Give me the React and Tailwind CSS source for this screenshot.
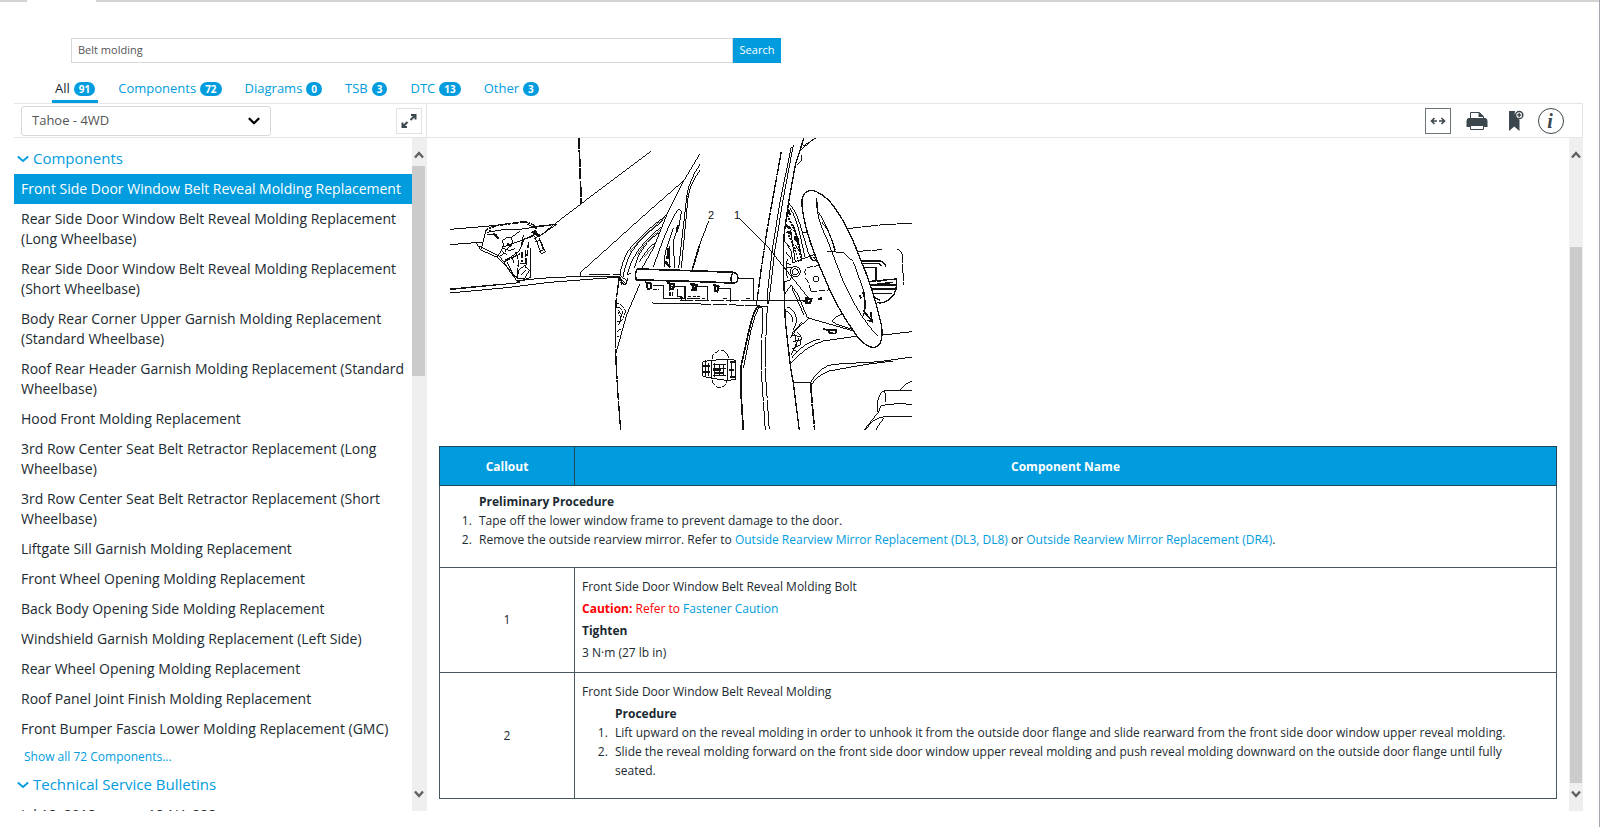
import React, { useState } from "react";
import { ChevronDown } from "lucide-react";

const tabs = [
  { name: "All", count: 91 },
  { name: "Components", count: 72 },
  { name: "Diagrams", count: 0 },
  { name: "TSB", count: 3 },
  { name: "DTC", count: 13 },
  { name: "Other", count: 3 },
];

const components = [
  "Front Side Door Window Belt Reveal Molding Replacement",
  "Rear Side Door Window Belt Reveal Molding Replacement (Long Wheelbase)",
  "Rear Side Door Window Belt Reveal Molding Replacement (Short Wheelbase)",
  "Body Rear Corner Upper Garnish Molding Replacement (Standard Wheelbase)",
  "Roof Rear Header Garnish Molding Replacement (Standard Wheelbase)",
  "Hood Front Molding Replacement",
  "3rd Row Center Seat Belt Retractor Replacement (Long Wheelbase)",
  "3rd Row Center Seat Belt Retractor Replacement (Short Wheelbase)",
  "Liftgate Sill Garnish Molding Replacement",
  "Front Wheel Opening Molding Replacement",
  "Back Body Opening Side Molding Replacement",
  "Windshield Garnish Molding Replacement (Left Side)",
  "Rear Wheel Opening Molding Replacement",
  "Roof Panel Joint Finish Molding Replacement",
  "Front Bumper Fascia Lower Molding Replacement (GMC)",
];

const Link = ({ children }) => (
  <a href="#" className="text-[#009cde]">
    {children}
  </a>
);

const SectionTitle = ({ children }) => (
  <h2>
    <button type="button" className="flex items-center gap-1 pl-[3px] text-[15px] leading-[29px] text-[#009cde]">
      <svg viewBox="0 0 12 8" className="h-2 w-3" fill="none" stroke="currentColor" strokeWidth="1.8">
        <path d="M.8 1.500 6 6 11.200 1.500" />
      </svg>
      {children}
    </button>
  </h2>
);

// up / down arrows at the ends of the scroll rails
const Arrow = ({ down }) => (
  <svg viewBox="0 0 10 8" className="h-2 w-[10px] shrink-0" fill="none" stroke="#606060" strokeWidth="2.4">
    <path d={down ? "M1 1.5 5 6 9 1.5" : "M1 6.5 5 2 9 6.5"} />
  </svg>
);

// --- Door drawing ---
const DoorDrawing = () => (
  <svg
    viewBox="449 138 464 294"
    className="block h-[294px] w-[464px]"
    fill="none"
    stroke="#111"
    strokeWidth="3"
    role="img"
    aria-label="Front side door window belt reveal molding"
  >
    {/* hood, pillar and mirror side */}
    <g transform="translate(440 135) scale(.3333)" shapeRendering="crispEdges">
      <path d="M416 8 419 70 421 130 424 206" strokeWidth="5" strokeDasharray="34 4 50 3" />
      <path d="M634 48 424 206 340 270 300 303M732 136 600 252 480 360 422 412 422 424" />
      <path d="M30 283 140 274 210 266M30 329 108 323M30 464 150 452 240 443M30 474 200 458 330 442 540 426M30 462 180 448" />
      <path d="M230 438 300 430 420 424 540 424" />
      <path d="M446 419H510M518 420H540" />
      <path d="M136 290Q142 278 180 270L250 261Q275 262 286 276" strokeWidth="5" strokeDasharray="12 3 7 2" />
      <path d="M136 292 128 325 122 345 108 323 126 322M140 292Q180 282 230 284L350 268 298 304 286 290M140 300 170 300 176 310M280 275 345 268M290 296 240 318 190 336" />
      <path d="M122 345 170 366 200 396 232 440 246 436 272 428 272 340M180 366 208 404 234 432M118 334 176 362" />
      <path d="M170 366Q196 340 188 316 196 306 214 308L218 320Q190 360 176 366M214 308 240 288M206 370 236 350 254 312 278 304" />
      <path d="M192 380 240 356M228 352 236 376 230 430M246 350V380M256 346V384M266 320 256 400" strokeWidth="4" strokeDasharray="20 4" />
      <path d="M236 404 254 392 268 406 254 430 232 432ZM242 420 258 406M284 304 304 356 316 350 298 310M282 312 300 300M286 320 300 316 310 346 298 350" />
      <path d="M160 296 176 312M276 290 292 300M284 286 296 306M202 326 214 334M196 376 208 370M280 296 300 300" strokeWidth="6" />
      <path d="M190 340Q210 352 226 340M186 350 204 362M250 300 244 330M200 380 226 430M216 366 222 384M240 384 262 388M262 268 290 282M146 284 160 292" />
      {/* a-pillar glass channels */}
      <path d="M780 56 732 136 680 240 640 340 606 400" />
      <path d="M780 88Q745 140 740 186L716 400M780 106Q748 150 744 190L724 400M740 186H748" />
      <path d="M680 240Q600 300 566 346 544 380 540 424 540 444 558 450M670 256Q600 310 574 352 556 384 548 430M664 276Q610 318 586 360 570 384 562 416M656 294Q620 318 596 362L582 400M650 320Q620 340 598 382" />
      <path d="M674 248Q606 304 570 350M660 286Q616 318 592 360M640 334 612 366" strokeWidth="2" />
      <path d="M640 396 668 318Q700 240 716 222L724 230 716 280M700 280 676 350 672 396M690 334 688 398M716 270 700 320 704 400M780 330 758 404" />
      <path d="M714 270 710 292M686 340 682 372M676 380 690 396" strokeWidth="7" />
      {/* door front edge */}
      <path d="M538 426 528 500 526 600 528 680 534 780 542 886" strokeWidth="4" strokeDasharray="60 3 90 2" />
      <path d="M600 446 560 540 528 654" />
      <path
        d="M530 506Q552 508 556 530L548 556M532 516Q546 518 548 536M530 560 546 556M530 590 542 582M530 606 536 604M534 530 542 546 536 570M536 526 544 540 540 566"
        strokeDasharray="8 2"
      />
      <path d="M540 430 558 448 564 430M540 440 552 450M562 420 572 414M542 424 560 436M546 434V450" />
      {/* reveal molding */}
      <path d="M780 408 592 402Q582 418 590 436L640 436 780 440" strokeWidth="5" />
      <path d="M604 438H640M640 452H672V492H735V456H690M780 492H740M712 462V484H726V494M636 504 780 507" />
      <path d="M640 464H656M744 486H780" strokeDasharray="10 4" />
      <path d="M616 442 634 446 634 460 622 462M682 444 702 448 700 462 688 464M752 446 770 450 768 464 756 466" strokeWidth="6" />
      <path d="M622 446V460M690 448V466M760 450V466" strokeWidth="6" />
      <path d="M690 472V482M698 472V482" strokeWidth="4" />
    </g>

    {/* b-pillar, steering wheel and dash */}
    <g transform="translate(680 135) scale(.3333)" shapeRendering="crispEdges">
      <path d="M56 408 160 412Q178 414 172 438 168 446 156 444L58 440" strokeWidth="5" />
      <path d="M160 412Q150 426 154 442M136 446H156" strokeWidth="4" />
      <path d="M174 430H220V498H370" />
      <path d="M30 448 48 452 44 466 34 466M98 448 116 454 112 470 102 468" strokeWidth="6" />
      <path d="M38 448V468M106 450V470" strokeWidth="6" />
      <path d="M0 454H16V496M52 456H84V498M118 460H152V500M0 488H10M66 490H76M130 492H140M198 492H210" />
      <path d="M0 496H220" strokeDasharray="40 6" />
      <path d="M0 506 120 508 260 514" strokeDasharray="44 5" />
      <path d="M86 258 54 342 36 404M178 250 262 334 386 490" />
      <path d="M370 498H384M380 490 394 492 390 504 380 504ZM414 492 426 490" strokeWidth="7" />
      {/* pillar */}
      <path d="M304 50 284 160 262 280 244 400 232 490" strokeWidth="4" strokeDasharray="70 3 40 2" />
      <path d="M334 36 300 200 276 350 264 460 262 508M340 30 308 200 284 350 266 508" />
      <path d="M372 8 346 90 326 200 312 300 310 400 316 560 332 700 340 744 358 886" strokeWidth="4" />
      <path d="M368 34 410 8M364 44 400 12M364 60 366 76 350 90" />
      <path d="M262 512 258 600 258 740 268 886M248 520 246 600 246 740 256 886" strokeDasharray="90 4" />
      <path d="M262 514 234 516Q222 522 206 590L184 690 182 760 190 886" strokeWidth="5" />
      <path d="M240 516Q228 524 212 590L190 700M232 490 230 510" />
      {/* hinge trim between pillar and wheel */}
      <path d="M326 204Q344 220 360 268L384 350 392 372M330 220Q346 240 360 300L376 370M340 270 354 310 366 372M332 290 346 380M320 268 334 282 330 300M322 330 334 350 338 384M368 292 386 294" />
      <path d="M322 240 336 270 350 302 364 380M326 300 344 340 356 380" strokeWidth="5" strokeDasharray="6 4" />
      <path d="M318 270 330 280M320 290 336 296M344 304 352 316M324 224 330 240" strokeWidth="7" />
      <path d="M314 320 330 336M316 350 334 372M318 384 334 390M340 308 358 330M346 330 358 350" />
      <circle cx="346" cy="410" r="15" />
      <circle cx="346" cy="410" r="9" />
      <path d="M316 400 336 396M312 440 330 436 336 420M336 384 404 358M322 372Q314 400 322 430" />
      <path d="M376 420Q370 398 390 396L416 392M376 430Q388 440 392 470L456 464" strokeDasharray="18 5" />
      <circle cx="408" cy="432" r="8" />
      <path d="M392 362Q392 378 408 376M400 366 412 380" strokeWidth="4" />
      <path d="M312 480 334 450 354 480 382 548 520 588M336 460 372 540M320 516Q348 520 350 560L340 584M318 530Q336 530 338 560" />
      <path d="M390 548 340 590 332 610M330 610 366 560M336 600 364 606 360 630 340 640M340 620 366 614M334 660 356 610M344 596 350 632M336 640 350 650M352 590 362 604" />
      <path d="M446 584 470 586 466 596 448 594ZM430 582 446 586" strokeWidth="5" />
      {/* dash edges */}
      <path d="M334 684Q380 632 430 618L540 602M334 670Q372 620 420 612M610 600 696 590M340 744H388L392 742Q420 694 460 688L600 680 696 666M396 746Q424 708 470 704L560 688 640 678" />
      <path d="M392 744 396 800 404 886" strokeWidth="5" strokeDasharray="60 4" />
      <path d="M492 282 600 270 696 264M524 350 606 344M650 342Q668 346 668 370L670 450" strokeDasharray="50 3" />
      <path d="M456 558Q470 536 510 534M456 558 470 568 530 588" />
      {/* column and stalks */}
      <path d="M540 378H600Q616 382 618 396M536 386H596L606 392M550 398H588V438M560 440 650 432Q652 470 636 486 610 510 590 502M566 450H650M570 462H644M580 476H636" strokeWidth="4" />
      <path d="M590 438 620 436M590 448 640 442M580 486 600 496" strokeWidth="5" />
      <path d="M490 356Q520 364 534 396M496 352Q528 360 540 396" strokeWidth="5" />
      {/* steering wheel */}
      <path
        d="M366 210Q362 168 396 166 420 170 450 200 500 260 540 370 580 460 604 570 614 630 582 638 556 636 530 602 470 520 430 420 372 290 366 210Z"
        fill="#fff"
        strokeWidth="4"
      />
      <path d="M410 190Q408 250 440 310L490 440Q540 550 592 602M410 190 414 230Q430 250 450 300L466 350M426 262Q446 280 466 346M440 350 490 352 520 380 552 470 556 520 548 546" />
      <path d="M548 470Q560 500 552 530L576 558 572 530M538 480 544 490M560 556 576 558" strokeWidth="5" />
      {/* door latch */}
      <path d="M96 672Q98 648 122 646 144 648 146 672M96 736Q104 758 120 758 138 756 140 738" strokeDasharray="16 4" />
      <path d="M68 680 96 676 144 672 166 676V734L140 736 96 730 68 724ZM78 676V726M94 676V730M144 672V736M156 680V730M98 690H138M98 700H138M98 722H138M104 684V726M130 690V724M118 690V722M86 684V722" />
      <path d="M98 706H124M150 682H164M150 726H164M70 694H90M70 710H90M106 714H128M148 704H162" strokeWidth="6" />
      {/* seat */}
      <path d="M592 830Q590 790 604 772 614 764 660 766L696 768M696 738Q672 746 660 766M596 832 602 812Q640 804 696 808M600 826Q580 850 552 886M696 846H610Q578 850 556 886M614 766 618 800M612 850Q596 866 588 886" />
    </g>

    <g fill="#111" stroke="none" className="font-['Liberation_Sans'] text-[11px]">
      <text x="708" y="219">2</text>
      <text x="734" y="219">1</text>
    </g>
  </svg>
);

export default function App() {
  const [query, setQuery] = useState("Belt molding");
  const [tab, setTab] = useState("All");
  const [selected, setSelected] = useState(0);

  return (
    <div className="flex h-screen flex-col overflow-hidden border-r border-[#a5a5ad] bg-white pr-4 pb-4 pl-[14px] font-['Open_Sans',sans-serif] text-[#1b2a31]">
      {/* browser tab strip edge */}
      <div className="-mr-4 -ml-[14px] flex h-[2px] shrink-0 justify-between">
        <div className="w-[27px] bg-[#d4d4d4]" />
        <div className="ml-[69px] grow bg-[#d4d4d4]" />
      </div>

      {/* Search */}
      <form className="mt-9 ml-[57px] flex h-[25px] w-[710px] shrink-0" onSubmit={(e) => e.preventDefault()}>
        <input
          type="text"
          aria-label="Search"
          className="min-w-0 grow border border-[#d5d9dd] px-[6px] text-[11px] text-[#555] outline-none"
          value={query}
          onChange={(e) => setQuery(e.target.value)}
        />
        <button type="submit" className="w-12 bg-[#009cde] text-[11px] text-white">
          Search
        </button>
      </form>

      {/* Tabs */}
      <nav className="mt-[14px] ml-[38px] flex h-[26px] shrink-0 gap-[17px]">
        {tabs.map((t) => (
          <button
            key={t.name}
            type="button"
            onClick={() => setTab(t.name)}
            className={`flex items-center gap-1 border-b-3 px-[3px] text-[13px] ${
              tab === t.name ? "border-[#009cde] text-[#1b2a31]" : "border-transparent text-[#009cde]"
            }`}
          >
            {t.name}
            <span className="rounded-full bg-[#009cde] px-[5px] text-[10px] leading-[14px] font-bold text-white">
              {t.count}
            </span>
          </button>
        ))}
      </nav>

      {/* Toolbar */}
      <div className="flex h-[35px] shrink-0 border-y border-r border-[#e3e5e7]">
        <div className="flex w-[413px] shrink-0 items-center justify-between border-r border-[#e3e5e7] pr-1 pl-[7px]">
          <div className="relative">
            <select
              aria-label="Vehicle"
              className="block h-[30px] w-[250px] appearance-none rounded-[3px] border border-[#d5d9dd] bg-white px-[10px] text-[13px] text-[#555]"
            >
              <option>Tahoe - 4WD</option>
            </select>
            <ChevronDown className="pointer-events-none absolute top-[6px] right-2 h-[18px] w-[18px] text-black" strokeWidth={3} />
          </div>
          <button type="button" aria-label="Expand" className="flex h-[26px] w-[26px] items-center justify-center border border-[#e0e3e6]">
            <svg viewBox="0 0 16 16" className="h-4 w-4" fill="none" stroke="#3c474d" strokeWidth="2">
              <path d="M10 2h4.5v4.5M14 2.5 9.5 7M6 14H1.500V9.500M2 13.500 6.500 9" />
            </svg>
          </button>
        </div>
        <div className="flex grow items-center justify-end gap-[13px] pr-[18px] text-[#3c474d]">
          <button type="button" aria-label="Fit width" className="flex h-[26px] w-[26px] items-center justify-center border border-[#6b7479]">
            <svg viewBox="0 0 16 10" className="h-[10px] w-4" fill="none" stroke="currentColor" strokeWidth="1.6">
              <path d="M7 5H1.500M4.500 2 1.500 5 4.500 8M9 5h5.500M11.500 2 14.500 5 11.500 8" />
            </svg>
          </button>
          <button type="button" aria-label="Print" className="flex w-[26px] justify-center">
            <svg viewBox="0 0 22 20" className="h-5 w-[22px]" fill="currentColor">
              <path d="M4.500 1.500H13.500L17.500 5.500V8H4.500Z" fill="#fff" stroke="currentColor" strokeWidth="1" />
              <path d="M12.500 1 18 6H12.500Z" />
              <path d="M2.500 7H19.500Q21.500 7.500 21.500 10V16H.5V10Q.8 7 2.500 7Z" />
              <path d="M4.500 14.500H17.500V18.500H4.500Z" fill="#fff" stroke="currentColor" strokeWidth="1" />
            </svg>
          </button>
          <button type="button" aria-label="Bookmark" className="flex w-[26px] justify-center">
            <svg viewBox="0 0 16 22" className="h-[22px] w-4" fill="currentColor">
              <path d="M1 1H7Q5.500 6.500 11.500 9.800V21L6.200 16.500 1 21Z" />
              <circle cx="11.200" cy="5" r="3.600" fill="#fff" stroke="currentColor" strokeWidth="1.500" />
              <path d="M10.500 3H11.900V4.300H13.200V5.700H11.900V7H10.500V5.700H9.200V4.300H10.500Z" />
            </svg>
          </button>
          <button
            type="button"
            aria-label="Information"
            className="-ml-1 flex h-[26px] w-[26px] items-center justify-center rounded-full border border-[#3c474d] pr-[2px] font-['Liberation_Serif',serif] text-[20px] leading-none font-bold italic"
          >
            i
          </button>
        </div>
      </div>

      <div className="flex min-h-0 grow">
        {/* Results list */}
        <aside className="flex w-[413px] shrink-0">
          <div className="min-w-0 grow overflow-hidden pt-[6px] text-[14px]">
            <SectionTitle>Components</SectionTitle>
            <ul className="pt-px">
              {components.map((name, i) => (
                <li key={name}>
                  <a
                    href="#"
                    onClick={() => setSelected(i)}
                    className={`block py-[5px] pl-[7px] leading-5 ${i === selected ? "bg-[#009cde] text-white" : ""}`}
                  >
                    {name}
                  </a>
                </li>
              ))}
            </ul>
            <a href="#" className="block pl-[10px] text-[12px] leading-[26px] text-[#009cde]">
              Show all 72 Components...
            </a>
            <SectionTitle>Technical Service Bulletins</SectionTitle>
            <a href="#" className="flex gap-[52px] pt-[6px] pl-[7px] leading-5">
              <span>Jul 18, 2018</span>
              <span>18-NA-228</span>
            </a>
          </div>
          <div className="flex w-[15px] shrink-0 flex-col items-center bg-[#efefef] pt-[13px] pr-[2px] pb-[13px]">
            <Arrow />
            <div className="mt-[7px] h-[210px] w-[13px] bg-[#cbcbcb]" />
            <div className="grow" />
            <Arrow down />
          </div>
        </aside>

        {/* Article */}
        <main className="min-w-0 grow overflow-hidden pr-3 pl-3">
          <div className="pl-[10px]">
            <DoorDrawing />
          </div>
          <table className="mt-[14px] w-full border-collapse text-[12px] [&_td]:border [&_td]:border-[#4a575e] [&_th]:border [&_th]:border-[#22465a]">
            <thead>
              <tr className="h-[39px] bg-[#009cde] text-white">
                <th className="w-[135px] pt-[2px]">Callout</th>
                <th className="pt-[2px]">Component Name</th>
              </tr>
            </thead>
            <tbody>
              <tr>
                <td colSpan={2} className="pt-[6px] pb-[18px] pl-[39px] leading-[19px]">
                  <b>Preliminary Procedure</b>
                  <ol className="-ml-1 list-decimal">
                    <li className="pl-1">Tape off the lower window frame to prevent damage to the door.</li>
                    <li className="pl-1">
                      Remove the outside rearview mirror. Refer to{" "}
                      <Link>Outside Rearview Mirror Replacement (DL3, DL8)</Link> or{" "}
                      <Link>Outside Rearview Mirror Replacement (DR4)</Link>.
                    </li>
                  </ol>
                </td>
              </tr>
              <tr>
                <td className="text-center">1</td>
                <td className="px-[7px] pt-2 pb-2 leading-[22px]">
                  <p>Front Side Door Window Belt Reveal Molding Bolt</p>
                  <p className="text-[#f00]">
                    <b>Caution:</b> Refer to <Link>Fastener Caution</Link>
                  </p>
                  <p className="font-bold">Tighten</p>
                  <p>3 N·m (27 lb in)</p>
                </td>
              </tr>
              <tr>
                <td className="text-center">2</td>
                <td className="px-[7px] pt-[7px] pb-[18px] leading-[19px]">
                  <p className="leading-[24px]">Front Side Door Window Belt Reveal Molding</p>
                  <div className="pr-5 pl-[33px]">
                    <b>Procedure</b>
                    <ol className="-ml-1 list-decimal">
                      <li className="pl-1">
                        Lift upward on the reveal molding in order to unhook it from the outside door flange and slide rearward
                        from the front side door window upper reveal molding.
                      </li>
                      <li className="pl-1">
                        Slide the reveal molding forward on the front side door window upper reveal molding and push reveal
                        molding downward on the outside door flange until fully seated.
                      </li>
                    </ol>
                  </div>
                </td>
              </tr>
            </tbody>
          </table>
        </main>
        <div className="flex w-[14px] shrink-0 flex-col items-center bg-[#efefef] pt-[13px] pb-[13px]">
          <Arrow />
          <div className="mt-[88px] mb-[7px] w-3 grow bg-[#cbcbcb]" />
          <Arrow down />
        </div>
      </div>
    </div>
  );
}
